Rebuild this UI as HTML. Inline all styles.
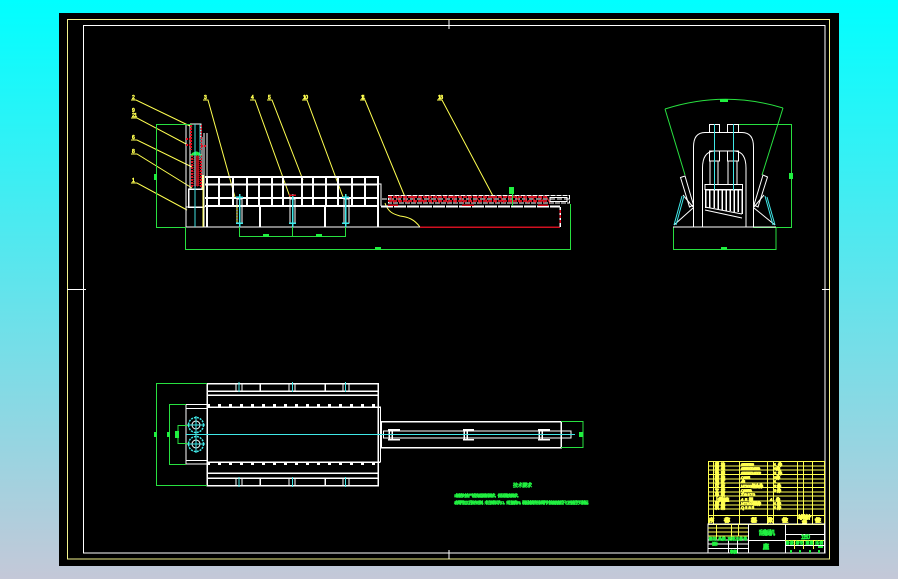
<!DOCTYPE html>
<html lang="zh">
<head>
<meta charset="utf-8">
<title>CAD</title>
<style>
html,body{margin:0;padding:0;width:898px;height:579px;overflow:hidden;background:linear-gradient(180deg,#00ffff 0%,#c4c8d8 100%);}
svg{position:absolute;left:0;top:0;display:block;}
text{font-family:"Liberation Sans","Noto Sans CJK SC",sans-serif;}
</style>
</head>
<body>
<svg width="898" height="579" viewBox="0 0 898 579" fill="none" shape-rendering="crispEdges">
<rect x="59" y="13" width="780" height="553" fill="#000"/>
<!-- frames -->
<rect x="67.5" y="19.5" width="762" height="539.5" stroke="#f4f48c" stroke-width="1"/>
<rect x="83.5" y="25.5" width="741.5" height="527.5" stroke="#fff" stroke-width="1"/>
<path d="M449 20V29M449 550V559M67 289.500H86M822 289.500H830" stroke="#fff"/>

<!-- leaders -->
<g stroke="#ffff50" stroke-width="1" shape-rendering="auto">
<path d="M131 100H136L192 127M131 118H137L188 145M131 140H137L192 167M131 154H137L192 188M131 183H137L187 210"/>
<path d="M203 100H208L235 197M250 100H255L290 197M267 100H272L303 180M302 100H307L343 197M360 100H365L405 197M437 100H442L493 196"/>
<path d="M385 203C388 212 393 214 400 216C408 217 414 219 420 227"/>
</g>
<g fill="#ffff50" stroke="#ffff50" stroke-width=".6" font-size="5">
<text x="132" y="99" textLength="4">2</text>
<text x="132" y="112" textLength="4">9</text>
<text x="132" y="117" textLength="5">21</text>
<text x="132" y="139" textLength="4">6</text>
<text x="132" y="153" textLength="5">8</text>
<text x="132" y="182" textLength="4">1</text>
<text x="204" y="99" textLength="4">3</text>
<text x="251" y="99" textLength="4">4</text>
<text x="268" y="99" textLength="4">5</text>
<text x="303" y="99" textLength="5">10</text>
<text x="361" y="99" textLength="4">11</text>
<text x="438" y="99" textLength="5">18</text>
</g>

<!-- front view: frame -->
<g stroke="#fff" stroke-width="2">
<path d="M205 177H379M205 184.500H379M205 198H379M205 206H379M378 176V227"/>
<path d="M219 177V206M233 177V206M247 177V206M259 177V206M272 177V206M283 177V206M302 177V206M313 177V206M326 177V206M338 177V206M352 177V206M365 177V206"/>
<path d="M207 176V227M260 206V227M325 206V227"/>
</g>
<path d="M186 227H420M379 184H381V206" stroke="#fff" stroke-width="1"/>
<!-- column -->
<g stroke="#fff" stroke-width="1">
<path d="M186 125V227M204 133V227M207 133V176M186 227H207"/>
<path d="M190 124H201V137M190 124V137"/>
<rect x="188.500" y="189" width="15" height="18" stroke-width="1.500"/>
<path d="M190 137V189M202 137V189M186 207H205"/>
</g>
<g stroke="#e01020" stroke-width="2" stroke-dasharray="2 1">
<path d="M191 125V150M201 125V150M186 139H191M201 146H206M192 155V188M201 155V188M186 145H191"/>
</g>
<path d="M196 156H199V186H194V156" fill="#a01018" stroke="#e01020" stroke-dasharray="1 1"/>
<path d="M191 155Q196 149 201 155Z" fill="#20f040" stroke="#20f040"/>
<path d="M195 124V227" stroke="#40e0e0" stroke-width="1"/>
<path d="M200 124V160" stroke="#40e0e0" stroke-width="1"/>
<path d="M203 175V227" stroke="#ffff50" stroke-width="1"/>

<!-- cylinders -->
<g stroke="#fff" stroke-width="1">
<rect x="237" y="199" width="5" height="24"/>
<rect x="290" y="199" width="5" height="24"/>
<rect x="344" y="199" width="5" height="24"/>
</g>
<g stroke="#40e8e8" stroke-width="1.500">
<path d="M239.500 194V227M292.500 194V227M345.500 194V227M236 197H243M236 223H243M289 223H296M342 197H349M342 223H349"/>
</g>
<path d="M289 195H296" stroke="#e01020" stroke-width="1.500"/>
<path d="M237 205V222" stroke="#ffff50" stroke-dasharray="2 1"/>

<!-- bed -->
<rect x="388.500" y="195.500" width="181" height="7.500" stroke="#fff" stroke-dasharray="5 1"/>
<path d="M382 199H570" stroke="#fff" stroke-dasharray="5 2"/>
<path d="M388 197H548M388 201H548" stroke="#d01020" stroke-width="2" stroke-dasharray="4 1"/>
<path d="M390 196L394 203M396 196L400 203M404 196L408 203M412 196L416 203M420 196L424 203M428 196L432 203M436 196L440 203M444 196L448 203M452 196L456 203M460 196L464 203M468 196L472 203M476 196L480 203M484 196L488 203M492 196L496 203M500 196L504 203M508 196L512 203M516 196L520 203M524 196L528 203M532 196L536 203M540 196L544 203M546 196L550 203" stroke="#f02030" shape-rendering="auto"/>
<rect x="550" y="197.500" width="17" height="4" stroke="#fff"/>
<path d="M381 206.500H560" stroke="#fff" stroke-width="2" stroke-dasharray="12 1"/>
<path d="M388 205H398M462 205H474M538 205H548" stroke="#e01020" stroke-width="1.500"/>
<path d="M420 227H560" stroke="#d01020" stroke-width="1.500"/>
<path d="M560 207V227" stroke="#fff" stroke-width="1.500"/>
<path d="M560 210V224" stroke="#e01020" stroke-width="1.500" stroke-dasharray="3 2"/>

<!-- front view dims -->
<g stroke="#28e040" stroke-width="1">
<path d="M192 124.500H156.500V227.500H186M185.500 227V249.500H570.500V204"/>
<path d="M239.500 227V236.500H345.500V227M292.500 227V236.500"/>
<path d="M512.500 188V206"/>
</g>
<g fill="#20f040">
<rect x="154" y="174" width="3" height="6"/>
<rect x="263" y="234" width="6" height="3"/>
<rect x="316" y="234" width="6" height="3"/>
<rect x="375" y="247" width="6" height="3"/>
<rect x="509" y="187" width="5" height="7"/>
</g>

<!-- side view -->
<g stroke="#28e040" stroke-width="1" shape-rendering="auto">
<path d="M665 109Q724 90 783 108"/>
<path d="M665 109L685 175M783 108L762 175"/>
</g>
<g stroke="#28e040" stroke-width="1">
<path d="M738 124.500H791.500V227.500H753M673.500 227V249.500H776V227"/>
</g>
<g fill="#20f040">
<rect x="720" y="99" width="8" height="3"/>
<rect x="789" y="173" width="4" height="6"/>
<rect x="721" y="247" width="6" height="3"/>
</g>
<g stroke="#fff" stroke-width="1" shape-rendering="auto">
<path d="M693.500 227V147Q693.500 132.500 705 132.500H742Q753.500 132.500 753.500 147V227"/>
<path d="M702.500 227V168Q702.500 152 714 151H735Q746 152 746 168V227"/>
<path d="M673 227H776"/>
<path d="M680.500 177.500L685 176L693.500 205L689.500 207Z"/>
<path d="M767.500 177L763 175L754 205L758 207Z"/>
<path d="M674 225L693 208M775 225L754 208M693 207L683 195M754 207L764 195"/>
<path d="M705 207L742 214M705 210L742 218"/>
</g>
<g stroke="#fff" stroke-width="1">
<rect x="709.500" y="124.500" width="10" height="8"/>
<rect x="727.500" y="124.500" width="11" height="8"/>
<rect x="709.500" y="151" width="10" height="10"/>
<rect x="727.500" y="151" width="11" height="10"/>
<path d="M710 161V184M718 161V184M728 161V184M737 161V184"/>
<rect x="705" y="184.500" width="37.500" height="5"/>
</g>
<g stroke="#fff" stroke-width="1.500">
<path d="M705.500 189V208M709.500 189V208M714 189V208M718 189V210M722 189V210M726 189V211M730 189V211M734 189V212M738 189V212M742 189V214M705 189.500H742"/>
</g>
<g stroke="#40e8e8" stroke-width="1" shape-rendering="auto">
<path d="M714.500 124V190M733.500 124V190"/>
<path d="M682 196L674 225M684 196L676 225M765 196L773 225M767 197L775 225"/>
</g>

<!-- plan view -->
<g stroke="#fff" stroke-width="1">
<rect x="207" y="383.500" width="171" height="102" stroke-width="1.500"/>
<path d="M207 391H378M207 395H378M207 407H380M207 462H380M207 473H378M207 478H378" stroke-width="1.500"/>
<path d="M260 383V391M325 383V391M260 478V485M325 478V485" stroke-width="1.500"/>
<rect x="186" y="404.500" width="21" height="59.500"/>
<path d="M186 408.500H207M186 460.500H207"/>
<path d="M378 407H380.500V462H378" />
<path d="M381 421.500H561V447.500H381M381 421V447" stroke-width="1.500"/>
<rect x="383.500" y="431" width="187.500" height="7"/>
<path d="M388 429.500H400M388 439.500H400M463 429.500H474M463 439.500H474M538 429.500H550M538 439.500H550" stroke-width="1.500"/>
<path d="M389 429V440M392 429V440M464 429V440M467 429V440M539 429V440M542 429V440" stroke-width="1.500"/>
</g>
<path d="M207 405.500H378M207 463.500H378" stroke="#fff" stroke-width="3" stroke-dasharray="3 8"/>
<g stroke="#40e8e8" stroke-width="1">
<path d="M186 434.500H575M239 382V392M292.500 382V392M345.500 382V392M239 477V487M292.500 477V487M345.500 477V487"/>
</g>
<g stroke="#fff" stroke-width="1">
<path d="M236 384V391M242 384V391M289 384V391M295 384V391M343 384V391M349 384V391M236 478V485M242 478V485M289 478V485M295 478V485M343 478V485M349 478V485"/>
</g>
<g stroke="#40e8e8" stroke-width="1.500" stroke-dasharray="2 1" shape-rendering="auto">
<circle cx="196" cy="425" r="7.500"/>
<circle cx="196" cy="444" r="7.500"/>
</g>
<circle cx="196" cy="425" r="4" stroke="#fff" shape-rendering="auto"/>
<circle cx="196" cy="444" r="4" stroke="#fff" shape-rendering="auto"/>
<path d="M187 425H205M196 416V434M187 444H205M196 435V453" stroke="#40e8e8"/>
<g stroke="#28e040" stroke-width="1">
<path d="M207 383.500H156.500V485.500H207"/>
<path d="M186 404.500H169.500V464.500H186"/>
<path d="M188 425.500H178V443.500H188"/>
<path d="M561 421.500H583V447.500H561"/>
</g>
<g fill="#20f040">
<rect x="154" y="432" width="3" height="5"/>
<rect x="167" y="432" width="3" height="5"/>
<rect x="175" y="431" width="4" height="7"/>
<rect x="579" y="432" width="4" height="5"/>
</g>

<!-- notes -->
<g fill="#20f040" stroke="#20f040" stroke-width=".6" shape-rendering="auto">
<text x="513" y="487" font-size="5" textLength="19">技术要求</text>
<text x="454" y="497" font-size="4" textLength="67">1.制造时应严格按照图纸要求，保证精度要求。</text>
<text x="454" y="504" font-size="4" textLength="137">2.各零件加工后应去毛刺，未注倒角均为C1，未注圆角R2，装配前清洗所有零件并检查各部位尺寸合格后方可装配。</text>
</g>

<!-- title block -->
<g stroke="#ffff50" stroke-width="1">
<rect x="708.500" y="461.500" width="116" height="63"/>
<path d="M708 466H824M708 470H824M708 474.500H824M708 479H824M708 483H824M708 487.500H824M708 492H824M708 496H824M708 501H824M708 505H824M708 509H824M708 515.500H824"/>
<path d="M713.500 461V524M739.500 461V524M767.500 461V524M773.500 461V524M797.500 461V524M803.500 461V515M812.500 461V524"/>
</g>
<g fill="#ffff50" stroke="#ffff50" stroke-width="1" font-size="4" shape-rendering="auto">
<text x="715" y="466" textLength="10">螺栓</text>
<text x="715" y="470" textLength="10">螺母</text>
<text x="715" y="474.500" textLength="10">垫圈</text>
<text x="715" y="479" textLength="10">销轴</text>
<text x="715" y="483" textLength="10">油缸</text>
<text x="715" y="487.500" textLength="10">压板</text>
<text x="715" y="492" textLength="10">立柱</text>
<text x="715" y="496" textLength="10">导轨</text>
<text x="715" y="501" textLength="14">上横梁座</text>
<text x="715" y="505" textLength="10">底座</text>
<text x="715" y="509" textLength="10">机架</text>
<text x="741" y="466" textLength="13">GB/T5782</text>
<text x="741" y="470" textLength="19">GB/T6170-2000</text>
<text x="741" y="474.500" textLength="20">GB/T97.1-2002</text>
<text x="741" y="479" textLength="9">Q235</text>
<text x="741" y="483" textLength="4">45</text>
<text x="741" y="487.500" textLength="22">HT200组合件</text>
<text x="741" y="492" textLength="11">Q235A</text>
<text x="741" y="496" textLength="14">ZG270</text>
<text x="741" y="501" textLength="12">45钢</text>
<text x="741" y="505" textLength="20">HT200铸件</text>
<text x="741" y="509" textLength="13">Q235</text>
<text x="774" y="466" textLength="8">1件</text>
<text x="774" y="470" textLength="6">1件</text>
<text x="774" y="474.500" textLength="8">2件</text>
<text x="774" y="479" textLength="6">2件</text>
<text x="774" y="483" textLength="5">1</text>
<text x="774" y="487.500" textLength="7">2件</text>
<text x="774" y="492" textLength="7">2件</text>
<text x="770" y="501" textLength="10">4件</text>
<text x="774" y="505" textLength="7">1件</text>
<text x="774" y="509" textLength="7">1件</text>
<text x="709" y="522" font-size="5" textLength="4">序</text>
<text x="724" y="522" font-size="5" textLength="6">名称</text>
<text x="751" y="522" font-size="5" textLength="6">材料</text>
<text x="768" y="522" font-size="5" textLength="5">数</text>
<text x="782" y="522" font-size="5" textLength="6">备注</text>
<text x="798" y="519" font-size="5" textLength="13">单件总计</text>
<text x="802" y="524" font-size="4" textLength="5">重量</text>
<text x="815" y="522" font-size="5" textLength="6">备注</text>
</g>
<g stroke="#fff" stroke-width="1">
<path d="M708 553V524H824.500V553M748.500 524V553M785.500 524V553"/>
<path d="M748 540.500H824M785 534.500H824M785 545.500H824M708 540H748M708 544H748M708 548.500H748"/>
<path d="M728.500 540V553M737.500 540V553"/>
</g>
<g stroke="#ffff50" stroke-width="1">
<path d="M708 528H748M708 532H748M708 536H748M716.500 524V540M731.500 524V540M738.500 524V536"/>
<path d="M785 540.500H824M794.500 540V549M803.500 540V549M813.500 540V549"/>
</g>
<g fill="#20f040" stroke="#20f040" stroke-width=".8" shape-rendering="auto">
<text x="759" y="535" font-size="6" textLength="16">刮板机</text>
<text x="763" y="549" font-size="6" textLength="6">上座</text>
<text x="801" y="539" font-size="6" textLength="9">1:60</text>
<text x="709" y="540" font-size="3.500" textLength="38">标记 处数 更改文件号</text>
<text x="712" y="545" font-size="3.500" textLength="6">设计</text>
<text x="730" y="553" font-size="3.500" textLength="7">审核</text>
<text x="786" y="544" font-size="3.500" textLength="37">阶段 标记 重量 比例</text>
</g>
<g fill="#20f040">
<rect x="818" y="546" width="5" height="2"/>
<rect x="790" y="550" width="2" height="3"/>
<rect x="799" y="550" width="2" height="3"/>
<rect x="809" y="550" width="2" height="3"/>
<rect x="818" y="550" width="2" height="3"/>
</g>
</svg>
</body>
</html>
